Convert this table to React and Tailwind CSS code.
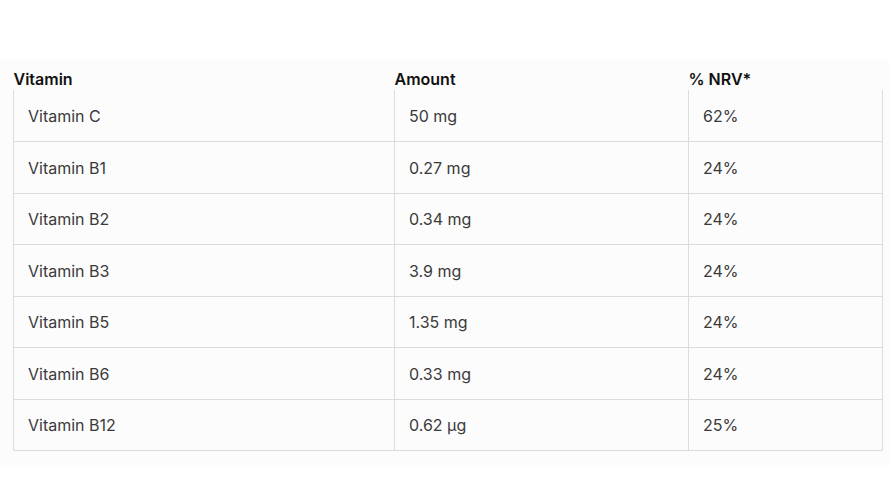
import React from "react";

const rows = [
  ["Vitamin C", "50 mg", "62%"],
  ["Vitamin B1", "0.27 mg", "24%"],
  ["Vitamin B2", "0.34 mg", "24%"],
  ["Vitamin B3", "3.9 mg", "24%"],
  ["Vitamin B5", "1.35 mg", "24%"],
  ["Vitamin B6", "0.33 mg", "24%"],
  ["Vitamin B12", "0.62 µg", "25%"],
];

export default function App() {
  return (
    <div className="w-[892px] h-[491px] bg-white pt-[60px]" style={{ fontFamily: "Inter, 'Noto Sans', sans-serif" }}>
      <div className="bg-[#fcfcfc] w-[889px] h-[405px] pl-[13px]">
        <table className="border-collapse w-[869px] table-fixed">
          <colgroup>
            <col className="w-[381px]" />
            <col className="w-[294px]" />
            <col className="w-[194px]" />
          </colgroup>
          <thead>
            <tr className="h-[30px] text-left text-[16px] text-[#111]">
              <th className="font-semibold align-bottom p-0 pb-[1px] leading-[20px]">Vitamin</th>
              <th className="font-semibold align-bottom p-0 pb-[1px] leading-[20px]">Amount</th>
              <th className="font-semibold align-bottom p-0 pb-[1px] leading-[20px]">% NRV*</th>
            </tr>
          </thead>
          <tbody className="text-[16px] text-[#3a3a3a]">
            {rows.map((r, i) => (
              <tr key={i} className="h-[51.5px]">
                {r.map((c, j) => (
                  <td
                    key={j}
                    className={`border border-[#dcdcdc] px-[14px] pt-[1px] align-middle ${i === 0 ? "border-t-0" : ""}`}
                  >
                    {c}
                  </td>
                ))}
              </tr>
            ))}
          </tbody>
        </table>
      </div>
    </div>
  );
}
